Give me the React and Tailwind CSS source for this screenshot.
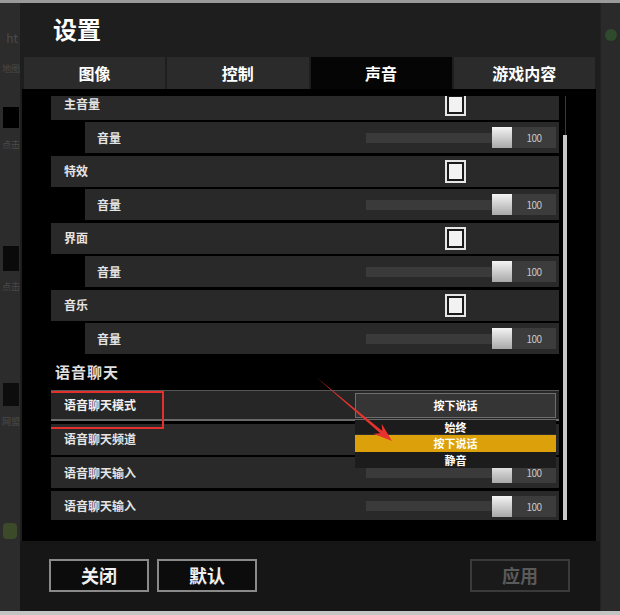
import React from "react";

const F = "font-['Noto_Sans_CJK_SC','Noto_Sans',sans-serif]";

function Checkbox() {
  return (
    <div className="w-[21px] h-[23px] border-2 border-[#e6e6e6] p-[2px] bg-[#1a1a1a]">
      <div className="w-full h-full bg-[#f2f2f2]" />
    </div>
  );
}

function MainRow({ label }) {
  return (
    <div className="h-[31px] shrink-0 bg-[#292929] flex items-center">
      <div className="flex-1 pl-[13px] text-[12px] leading-[14px] font-bold text-[#e4e4e4]">{label}</div>
      <Checkbox />
      <div className="w-[93px]" />
    </div>
  );
}

function Slider() {
  return (
    <div className="flex items-center pr-[3px]">
      <div className="w-[126px] h-[10px] bg-[#3a3a3a]" />
      <div className="w-[20px] h-[21px] bg-gradient-to-b from-[#f4f4f4] to-[#a9a9a9]" />
      <div className="w-[44px] h-[21px] bg-[#3c3c3c] flex items-center justify-center text-[10px] text-[#c8c8c8] tracking-tighter">
        100
      </div>
    </div>
  );
}

function SubRow({ label }) {
  return (
    <div className="h-[31px] shrink-0 ml-[34px] bg-[#292929] flex items-center">
      <div className="flex-1 pl-[12px] text-[12px] font-bold text-[#e4e4e4]">{label}</div>
      <Slider />
    </div>
  );
}

function VoiceSliderRow({ label }) {
  return (
    <div className="h-[31px] shrink-0 bg-[#292929] flex items-center">
      <div className="flex-1 pl-[13px] text-[12px] font-bold text-[#e4e4e4]">{label}</div>
      <Slider />
    </div>
  );
}

function Button({ children, disabled }) {
  return (
    <div
      className={
        disabled
          ? "w-[100px] h-[33px] border-2 border-[#3a3a3a] bg-[#1a1a1a] flex items-center justify-center text-[18px] font-bold text-[#5a5a5a]"
          : "w-[100px] h-[33px] border-2 border-[#8a8a8a] bg-[#0c0c0c] flex items-center justify-center text-[18px] font-bold text-[#f0f0f0]"
      }
    >
      {children}
    </div>
  );
}

export default function App() {
  const tabs = ["图像", "控制", "声音", "游戏内容"];
  return (
    <div className={`relative w-[620px] h-[615px] bg-[#2b2b2b] flex flex-col overflow-hidden ${F}`}>
      <div className="h-[3px] bg-[#9a9a9a] shrink-0" />
      <div className="flex flex-1 min-h-0">
        {/* left background strip */}
        <div className="w-[20px] shrink-0 flex flex-col items-end overflow-hidden text-[#4a4a4a] whitespace-nowrap bg-[#2c2c2c]">
          <div className="h-[27px]" />
          <div className="h-[16px] text-[12px] leading-[16px] pr-[2px]">ht</div>
          <div className="h-[15px]" />
          <div className="h-[16px] text-[9px] leading-[16px]">地图</div>
          <div className="h-[30px]" />
          <div className="h-[21px] w-[16px] bg-black mr-[1px]" />
          <div className="h-[10px]" />
          <div className="h-[14px] text-[9px] leading-[14px]">点击</div>
          <div className="h-[94px]" />
          <div className="h-[25px] w-[16px] bg-[#0a0a0a] mr-[1px]" />
          <div className="h-[9px]" />
          <div className="h-[14px] text-[9px] leading-[14px]">点击</div>
          <div className="h-[89px]" />
          <div className="h-[23px] w-[16px] bg-[#0d0d0d] mr-[1px]" />
          <div className="h-[9px]" />
          <div className="h-[14px] text-[9px] leading-[14px]">网盟</div>
          <div className="h-[94px]" />
          <div className="h-[16px] w-[14px] bg-[#3d4a2a] mr-[3px] rounded-sm" />
        </div>

        {/* window */}
        <div className="w-[580px] shrink-0 bg-[#1e1e1e] flex flex-col">
          <div className="h-[52px] shrink-0 flex items-center pl-[33px] text-[24px] font-bold text-white">设置</div>
          <div className="h-[34px] shrink-0 pt-[2px] grid grid-cols-4 gap-[2px] pl-[4px] pr-[5px]">
            {tabs.map((t, i) => (
              <div
                key={t}
                className={
                  i === 2
                    ? "bg-[#050505] flex items-center justify-center text-[16px] font-bold text-white"
                    : "bg-[#2b2b2b] flex items-center justify-center text-[16px] font-bold text-white"
                }
              >
                {t}
              </div>
            ))}
          </div>

          {/* content */}
          <div className="h-[452px] shrink-0 ml-[2px] mr-[4px] bg-black flex pt-[7px] pb-[21px] pl-[29px] pr-[29px]">
            <div className="flex-1 overflow-hidden">
              <div className="flex flex-col gap-[2.5px] -mt-[7.5px]">
                <MainRow label="主音量" />
                <SubRow label="音量" />
                <MainRow label="特效" />
                <SubRow label="音量" />
                <MainRow label="界面" />
                <SubRow label="音量" />
                <MainRow label="音乐" />
                <SubRow label="音量" />
                <div className="h-[31px] shrink-0 flex items-center pl-[4px] text-[15px] font-bold tracking-[1px] text-[#e0e0e0]">
                  语音聊天
                </div>
                <div className="relative z-10 h-[31px] shrink-0 bg-[#262626] border-t border-[#555] border-b-2 border-b-[#6a6a6a] flex items-center">
                  <div className="flex-1 pl-[13px] text-[12px] font-bold text-[#f0f0f0]">语音聊天模式</div>
                  <div className="w-[201px] h-[25px] mr-[3px] bg-[#353535] border border-[#6e6e6e] flex items-center justify-center text-[11px] font-bold text-white">
                    按下说话
                  </div>
                  <div className="absolute left-[-3px] top-[0px] w-[116px] h-[38px] border-2 border-[#e2302c]" />
                  <div className="absolute right-[3px] top-[29px] w-[201px] bg-[#1c1c1c] flex flex-col text-[11px] font-bold text-white">
                    <div className="h-[15px] flex items-center justify-center border-b border-[#2e2e2e]">始终</div>
                    <div className="h-[17px] flex items-center justify-center bg-[#dca10a]">按下说话</div>
                    <div className="h-[16px] flex items-center justify-center">静音</div>
                  </div>
                </div>
                <div className="h-[31px] shrink-0 bg-[#292929] flex items-center">
                  <div className="flex-1 pl-[13px] text-[12px] font-bold text-[#e4e4e4]">语音聊天频道</div>
                </div>
                <VoiceSliderRow label="语音聊天输入" />
                <VoiceSliderRow label="语音聊天输入" />
              </div>
            </div>
            <div className="w-[4px] ml-[4px] flex flex-col items-center">
              <div className="w-[1px] h-[39px] bg-[#3a3a3a]" />
              <div className="w-[4px] flex-1 bg-[#c8c8c8]" />
            </div>
          </div>

          {/* footer */}
          <div className="flex-1 bg-[#161616] flex items-start pt-[18px] pl-[29px] pr-[30px] gap-[8px]">
            <Button>关闭</Button>
            <Button>默认</Button>
            <div className="flex-1" />
            <Button disabled>应用</Button>
          </div>
        </div>

        {/* right background strip */}
        <div className="flex-1 bg-[#2a2a2a] border-l border-[#222] flex flex-col items-center pt-[26px]">
          <div className="w-[12px] h-[12px] rounded-full bg-[#2f4a2c]" />
        </div>
      </div>
      <div className="h-[4px] bg-[#c4c4c4] shrink-0" />

      {/* red annotation arrow */}
      <svg className="absolute left-0 top-0 z-20 pointer-events-none" width="620" height="615" viewBox="0 0 620 615">
        <polygon
          points="316,377 382.3,430.9 381.7,423.8 392,441 373.3,433.8 380.3,433.2"
          fill="#e8322d"
        />
      </svg>
    </div>
  );
}
